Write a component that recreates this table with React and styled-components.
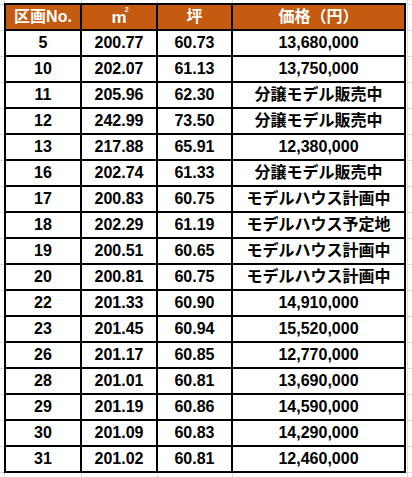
import React from "react";
import styled, { createGlobalStyle } from "styled-components";

const GlobalStyle = createGlobalStyle`
  html, body {
    margin: 0;
    padding: 0;
    background: #ffffff;
  }
`;

const grid = "#dcdcdc";
const vline = (x) =>
  `linear-gradient(to right, transparent ${x}px, ${grid} ${x}px, ${grid} ${x + 1}px, transparent ${x + 1}px)`;

const Sheet = styled.div`
  width: 412px;
  height: 477px;
  overflow: hidden;
  padding: 3px 0 0 4px;
  box-sizing: border-box;
  background-image: ${[4, 81, 157, 232, 407].map(vline).join(", ")},
    repeating-linear-gradient(
      to bottom,
      transparent 0 4px,
      ${grid} 4px 5px,
      transparent 5px 26px
    );
`;

const Table = styled.div`
  display: grid;
  grid-template-columns: 74px 74px 73px 171px;
  grid-auto-rows: 24px;
  gap: 2px;
  padding: 2px;
  width: max-content;
  background: #000000;
  font-family: "Liberation Sans", "Noto Sans CJK JP", Arial, sans-serif;
  font-weight: bold;
  font-size: 16px;
`;

const Cell = styled.div`
  display: flex;
  align-items: center;
  justify-content: center;
  background: ${(p) => (p.$head ? "#c55a11" : "#ffffff")};
  color: ${(p) => (p.$head ? "#ffffff" : "#000000")};
  white-space: nowrap;
  line-height: 1;
`;

const Unit = styled.span`
  position: relative;
  font-size: 17px;
`;

const Sup = styled.span`
  position: absolute;
  top: -3px;
  right: -2px;
  font-size: 7px;
`;

const rows = [
  ["5", "200.77", "60.73", "13,680,000"],
  ["10", "202.07", "61.13", "13,750,000"],
  ["11", "205.96", "62.30", "分譲モデル販売中"],
  ["12", "242.99", "73.50", "分譲モデル販売中"],
  ["13", "217.88", "65.91", "12,380,000"],
  ["16", "202.74", "61.33", "分譲モデル販売中"],
  ["17", "200.83", "60.75", "モデルハウス計画中"],
  ["18", "202.29", "61.19", "モデルハウス予定地"],
  ["19", "200.51", "60.65", "モデルハウス計画中"],
  ["20", "200.81", "60.75", "モデルハウス計画中"],
  ["22", "201.33", "60.90", "14,910,000"],
  ["23", "201.45", "60.94", "15,520,000"],
  ["26", "201.17", "60.85", "12,770,000"],
  ["28", "201.01", "60.81", "13,690,000"],
  ["29", "201.19", "60.86", "14,590,000"],
  ["30", "201.09", "60.83", "14,290,000"],
  ["31", "201.02", "60.81", "12,460,000"],
];

export default function App() {
  return (
    <>
      <GlobalStyle />
      <Sheet>
        <Table>
          <Cell $head>区画No.</Cell>
          <Cell $head>
            <Unit>
              m<Sup>2</Sup>
            </Unit>
          </Cell>
          <Cell $head>坪</Cell>
          <Cell $head>価格（円）</Cell>
          {rows.map((row, i) =>
            row.map((v, j) => <Cell key={i + "-" + j}>{v}</Cell>)
          )}
        </Table>
      </Sheet>
    </>
  );
}
